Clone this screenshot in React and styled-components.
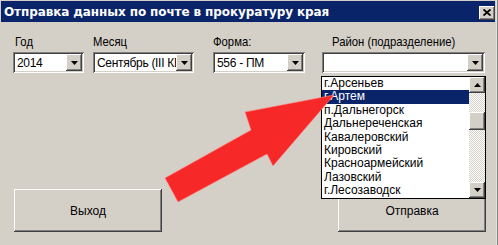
import React from "react";
import styled, { createGlobalStyle, css } from "styled-components";

const Global = createGlobalStyle`
  html, body { margin: 0; padding: 0; background: #d4d0c8; }
  body { font-family: "Liberation Sans", Arial, sans-serif; }
  * { box-sizing: border-box; }
`;

const raised = css`
  background: #d4d0c8;
  box-shadow: inset -1px -1px 0 #404040, inset 1px 1px 0 #ffffff,
    inset -2px -2px 0 #808080, inset 2px 2px 0 #d4d0c8;
`;

const Window = styled.div`
  position: relative;
  width: 498px;
  height: 245px;
  background: #d4d0c8;
  padding: 1px 3px 0 1px;
  overflow: hidden;
  box-shadow: inset -1px 0 0 #808080, inset -2px 0 0 #e8e6e0;
`;

const TitleBar = styled.div`
  height: 21px;
  background: #0a246a;
  display: flex;
  align-items: center;
  justify-content: space-between;
  padding: 0 0 0 3px;
`;

const Title = styled.span`
  color: #fff;
  font-family: "DejaVu Sans", "Liberation Sans", sans-serif;
  font-weight: bold;
  font-size: 12px;
  letter-spacing: -0.1px;
  margin-top: 1px;
`;

const CloseBtn = styled.div`
  ${raised};
  width: 16px;
  height: 14px;
  margin-top: 2px;
  display: flex;
  align-items: center;
  justify-content: center;
`;

const Body = styled.div`
  padding: 13px 0 0 12px;
`;

const FieldRow = styled.div`
  display: flex;
  align-items: flex-start;
`;

const Field = styled.div`
  position: relative;
  width: ${(p) => p.$w}px;
  margin-left: ${(p) => p.$ml}px;
  display: flex;
  flex-direction: column;
`;

const Label = styled.label`
  font-size: 11.3px;
  line-height: 14px;
  color: #000;
  padding-left: ${(p) => p.$indent || 0}px;
  height: 17px;
  transform: scaleY(1.1);
  transform-origin: left center;
`;

const Combo = styled.div`
  height: 21px;
  background: #fff;
  display: flex;
  align-items: center;
  justify-content: space-between;
  box-shadow: inset 1px 1px 0 #808080, inset -1px -1px 0 #ffffff,
    inset 2px 2px 0 #404040, inset -2px -2px 0 #d4d0c8;
  padding: 2px;
  overflow: hidden;
`;

const ComboText = styled.span`
  flex: 1;
  font-size: 12px;
  letter-spacing: -0.3px;
  line-height: 16px;
  padding-left: 2px;
  white-space: nowrap;
  overflow: hidden;
  color: #000;
`;

const ArrowBtn = styled.div`
  ${raised};
  flex: none;
  width: 16px;
  height: 17px;
  display: flex;
  align-items: center;
  justify-content: center;
`;

const DropList = styled.div`
  position: absolute;
  top: 41px;
  left: -1px;
  width: 165px;
  height: 123px;
  background: #fff;
  border: 1px solid #000;
  display: flex;
  z-index: 2;
`;

const Items = styled.div`
  flex: 1;
`;

const Item = styled.div`
  height: 13.4px;
  line-height: 13.4px;
  font-size: 12px;
  padding-left: 2px;
  white-space: nowrap;
  color: ${(p) => (p.$sel ? "#fff" : "#000")};
  background: ${(p) => (p.$sel ? "#0a246a" : "transparent")};
`;

const ScrollBar = styled.div`
  width: 16px;
  display: flex;
  flex-direction: column;
  background-color: #eeece8;
  background-image: repeating-conic-gradient(#ffffff 0 25%, #d4d0c8 0 50%);
  background-size: 2px 2px;
`;

const ScrollBtn = styled.div`
  ${raised};
  height: 16px;
  display: flex;
  align-items: center;
  justify-content: center;
  flex: none;
`;

const Track = styled.div`
  flex: 1;
  padding-top: 19px;
`;

const Thumb = styled.div`
  ${raised};
  height: 18px;
`;

const ButtonRow = styled.div`
  display: flex;
  justify-content: space-between;
  padding: 0 9px 0 1px;
  margin-top: 116px;
`;

const Button = styled.button`
  ${raised};
  width: 148px;
  height: 43px;
  border: none;
  font-family: "Liberation Sans", Arial, sans-serif;
  font-size: 12px;
  color: #000;
  padding: 0;
`;

const Overlay = styled.svg`
  position: absolute;
  left: 0;
  top: 0;
  pointer-events: none;
  z-index: 3;
`;

const Tri = ({ up }) => (
  <svg width="7" height="4" viewBox="0 0 7 4">
    <polygon points={up ? "3.5,0 7,4 0,4" : "0,0 7,0 3.5,4"} fill="#000" />
  </svg>
);

const ComboBox = ({ text }) => (
  <Combo>
    <ComboText>{text}</ComboText>
    <ArrowBtn>
      <Tri />
    </ArrowBtn>
  </Combo>
);

const districts = [
  "г.Арсеньев",
  "г.Артем",
  "п.Дальнегорск",
  "Дальнереченская",
  "Кавалеровский",
  "Кировский",
  "Красноармейский",
  "Лазовский",
  "г.Лесозаводск",
];

export default function App() {
  return (
    <>
      <Global />
      <Window>
        <TitleBar>
          <Title>Отправка данных по почте в прокуратуру края</Title>
          <CloseBtn>
            <svg width="8" height="7" viewBox="0 0 8 7">
              <path d="M0.5 0.5 L7.5 6.5 M7.5 0.5 L0.5 6.5" stroke="#000" strokeWidth="1.8" />
            </svg>
          </CloseBtn>
        </TitleBar>
        <Body>
          <FieldRow>
            <Field $w={71} $ml={0}>
              <Label $indent={2}>Год</Label>
              <ComboBox text="2014" />
            </Field>
            <Field $w={101} $ml={9}>
              <Label>Месяц</Label>
              <ComboBox text="Сентябрь (III КВ)" />
            </Field>
            <Field $w={92} $ml={19}>
              <Label>Форма:</Label>
              <ComboBox text="556 -  ПМ" />
            </Field>
            <Field $w={163} $ml={17}>
              <Label $indent={10}>Район (подразделение)</Label>
              <ComboBox text="" />
              <DropList>
                <Items>
                  {districts.map((d, i) => (
                    <Item key={d} $sel={i === 1}>
                      {d}
                    </Item>
                  ))}
                </Items>
                <ScrollBar>
                  <ScrollBtn>
                    <Tri up />
                  </ScrollBtn>
                  <Track>
                    <Thumb />
                  </Track>
                  <ScrollBtn>
                    <Tri />
                  </ScrollBtn>
                </ScrollBar>
              </DropList>
            </Field>
          </FieldRow>
          <ButtonRow>
            <Button>Выход</Button>
            <Button>Отправка</Button>
          </ButtonRow>
        </Body>
        <Overlay width="498" height="245" viewBox="0 0 498 245">
          <polygon
            points="165,178 251,130 245,112 334,95 273,166 267,154 178,202"
            fill="#f62828"
            stroke="#f88"
            strokeWidth="0.6"
          />
        </Overlay>
      </Window>
    </>
  );
}
